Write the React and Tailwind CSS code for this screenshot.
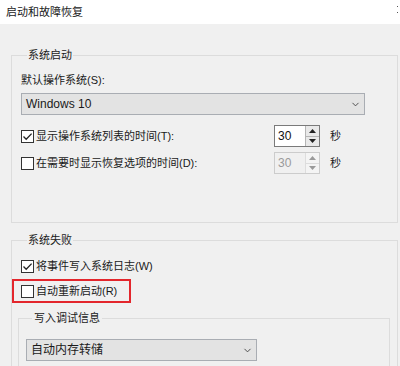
import { ChevronDown } from 'lucide-react';

const font = { fontFamily: '"Liberation Sans", "Noto Sans CJK SC", sans-serif' };

function CheckBox({ checked }) {
  return (
    <span className="flex h-[13px] w-[13px] shrink-0 items-center justify-center border border-[#333333] bg-white">
      {checked && (
        <svg width="11" height="11" viewBox="0 0 11 11">
          <path d="M1.5 5.5 L4.2 8.3 L9.6 2.6" fill="none" stroke="#222222" strokeWidth="1.3" />
        </svg>
      )}
    </span>
  );
}

function Spinner({ value, disabled }) {
  const arrow = disabled ? '#9a9a9a' : '#222222';
  return (
    <div
      className={`flex h-[22px] w-[46px] border ${disabled ? 'border-[#cccccc] bg-[#f0f0f0] text-[#9a9a9a]' : 'border-[#7a7a7a] bg-white text-[#111111]'}`}
    >
      <span className="flex flex-1 items-center pl-[3px] text-[12px] leading-none">{value}</span>
      <div className={`flex w-[14px] flex-col border-l ${disabled ? 'border-[#dddddd]' : 'border-[#b5b5b5]'}`}>
        <span className={`flex flex-1 items-center justify-center border-b ${disabled ? 'border-[#dddddd] bg-[#f4f4f4]' : 'border-[#b5b5b5] bg-[#e9e9e9]'}`}>
          <svg width="7" height="4" viewBox="0 0 7 4"><path d="M0 4 L3.5 0 L7 4 Z" fill={arrow} /></svg>
        </span>
        <span className={`flex flex-1 items-center justify-center ${disabled ? 'bg-[#f4f4f4]' : 'bg-[#e9e9e9]'}`}>
          <svg width="7" height="4" viewBox="0 0 7 4"><path d="M0 0 L3.5 4 L7 0 Z" fill={arrow} /></svg>
        </span>
      </div>
    </div>
  );
}

function Combo({ text, width }) {
  return (
    <div className={`flex h-[22px] ${width} items-center justify-between border border-[#a9adb3] bg-[#e3e3e3] pl-[4px] pr-[3px]`}>
      <span className="text-[12px] leading-none">{text}</span>
      <ChevronDown className="h-[11px] w-[11px] text-[#444444]" strokeWidth={2} />
    </div>
  );
}

export default function App() {
  return (
    <div className="h-[366px] w-[400px] overflow-hidden bg-[#f0f0f0] text-[11px] text-[#1a1a1a]" style={font}>
      {/* Title bar */}
      <div className="relative flex h-[24px] items-center bg-white pl-[6px]">
        <span>启动和故障恢复</span>
        <div className="absolute right-[2px] top-[6px] flex flex-col gap-[5px]">
          <span className="h-[1px] w-[1px] bg-[#555555]" />
          <span className="h-[1px] w-[1px] bg-[#555555]" />
        </div>
      </div>

      {/* 系统启动 */}
      <fieldset className="ml-[11px] mt-[24px] w-[387px] border border-[#dcdcdc] pb-[48px] pl-[9px]">
        <legend className="ml-[6px] px-[1px] leading-[14px]">系统启动</legend>
        <p className="mt-[11px] leading-[14px]">默认操作系统(S):</p>
        <div className="mt-[6px]">
          <Combo text="Windows 10" width="w-[344px]" />
        </div>
        <div className="mt-[10px] flex items-center">
          <div className="flex w-[253px] items-center gap-[2px]">
            <CheckBox checked />
            <span>显示操作系统列表的时间(T):</span>
          </div>
          <Spinner value="30" />
          <span className="ml-[10px]">秒</span>
        </div>
        <div className="mt-[5px] flex items-center">
          <div className="flex w-[253px] items-center gap-[2px]">
            <CheckBox />
            <span>在需要时显示恢复选项的时间(D):</span>
          </div>
          <Spinner value="30" disabled />
          <span className="ml-[10px]">秒</span>
        </div>
      </fieldset>

      {/* 系统失败 */}
      <fieldset className="ml-[11px] mt-[10px] w-[387px] border border-[#dcdcdc] pb-[20px] pl-[9px]">
        <legend className="ml-[6px] px-[1px] leading-[14px]">系统失败</legend>
        <div className="mt-[11px] flex h-[16px] items-center gap-[2px]">
          <CheckBox checked />
          <span>将事件写入系统日志(W)</span>
        </div>
        <div className="-ml-[9px] mt-[5px] flex h-[24px] w-[119px] items-center gap-[2px] border-2 border-[#e3262c] pl-[7px]">
          <CheckBox />
          <span>自动重新启动(R)</span>
        </div>
        <fieldset className="-ml-[3px] mt-[8px] w-[372px] border border-[#dcdcdc] pb-[20px] pl-[7px]">
          <legend className="ml-[6px] px-[2px] leading-[14px]">写入调试信息</legend>
          <div className="mt-[14px]">
            <Combo text="自动内存转储" width="w-[231px]" />
          </div>
        </fieldset>
      </fieldset>
    </div>
  );
}
